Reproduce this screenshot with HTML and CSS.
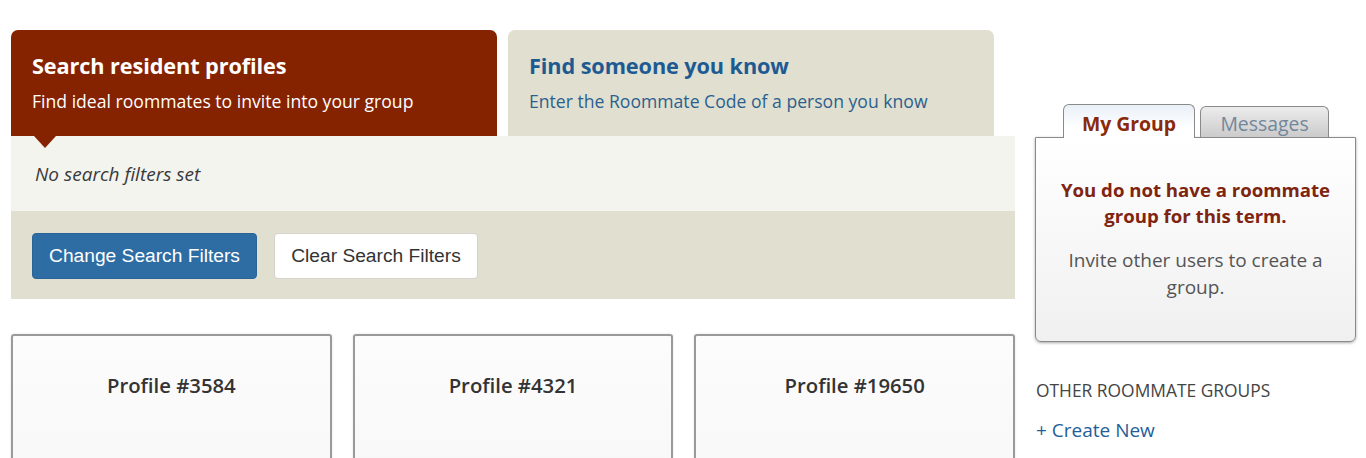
FILE: index.html
```html
<!DOCTYPE html>
<html>
<head>
<meta charset="utf-8">
<link rel="stylesheet" href="styles.css">
</head>
<body>
<div class="page">
  <div class="main">
    <div class="tabs">
      <div class="tab tab-active">
        <div class="tab-title">Search resident profiles</div>
        <div class="tab-sub">Find ideal roommates to invite into your group</div>
        <span class="pointer"></span>
      </div>
      <div class="tab tab-inactive">
        <div class="tab-title">Find someone you know</div>
        <div class="tab-sub">Enter the Roommate Code of a person you know</div>
      </div>
    </div>
    <div class="filters">No search filters set</div>
    <div class="actions">
      <button class="btn btn-primary">Change Search Filters</button>
      <button class="btn btn-default">Clear Search Filters</button>
    </div>
    <div class="cards">
      <div class="card"><div class="card-title">Profile #3584</div></div>
      <div class="card"><div class="card-title">Profile #4321</div></div>
      <div class="card"><div class="card-title">Profile #19650</div></div>
    </div>
  </div>
  <div class="side">
    <div class="side-tabs">
      <div class="stab stab-active">My Group</div>
      <div class="stab stab-inactive">Messages</div>
    </div>
    <div class="panel">
      <div class="panel-strong">You do not have a roommate group for this term.</div>
      <div class="panel-text">Invite other users to create a group.</div>
    </div>
    <div class="other-label">OTHER ROOMMATE GROUPS</div>
    <a class="create-link">+ Create New</a>
  </div>
</div>
</body>
</html>
```
FILE: styles.css
```css
* { box-sizing: border-box; }
html, body { margin: 0; padding: 0; background: #fff; overflow: hidden; }
body { font-family: "Open Sans", "Liberation Sans", sans-serif; color: #333; }

.page {
  display: flex;
  gap: 20px;
  padding: 30px 0 0 11px;
}
.main { width: 1004px; flex: none; }

.tabs { display: flex; gap: 11px; }
.tab {
  position: relative;
  width: 486px;
  height: 106px;
  border-radius: 7px 7px 0 0;
  padding: 21px 10px 0 21px;
  white-space: nowrap;
}
.tab-active { background: #852200; color: #fff; }
.tab-inactive { background: #e0dfd0; color: #1e5a92; }
.tab-title { font-size: 21.7px; font-weight: 700; line-height: 30px; letter-spacing: -0.1px; }
.tab-sub { font-size: 17.6px; line-height: 24px; margin-top: 8px; }
.tab-inactive .tab-sub { color: #2c5f8e; }
.pointer {
  position: absolute;
  left: 23px;
  bottom: -12px;
  width: 0; height: 0;
  border-left: 11px solid transparent;
  border-right: 11px solid transparent;
  border-top: 12px solid #852200;
}

.filters {
  background: #f4f4ef;
  height: 75px;
  padding: 24px 0 0 24px;
  font-style: italic;
  font-size: 19px;
  color: #3a3a3a;
  line-height: 28px;
}
.actions {
  background: #e0dfd0;
  height: 88px;
  padding: 22px 21px;
  display: flex;
  gap: 17px;
}
.btn {
  height: 46px;
  font-family: "Liberation Sans", Arial, sans-serif;
  font-size: 19.2px;
  border-radius: 4px;
  padding: 0;
  cursor: pointer;
}
.btn-primary { width: 225px; background: #2e6da4; color: #fff; border: 1px solid #2a6496; }
.btn-default { width: 204px; background: #fff; color: #333; border: 1px solid #d4d4cc; }

.cards {
  display: flex;
  gap: 21px;
  margin-top: 35px;
}
.card {
  width: 321px;
  height: 140px;
  border: 2px solid #9a9a9a;
  border-radius: 3px 3px 0 0;
  background: linear-gradient(#fcfcfc, #f8f8f8);
  box-shadow: 0 0 2px rgba(0,0,0,0.15);
  padding-top: 35px;
}
.card-title {
  text-align: center;
  font-size: 20.3px;
  font-weight: 600;
  color: #333;
  line-height: 28px;
}

.side { width: 321px; flex: none; padding-top: 74px; }
.side-tabs { display: flex; gap: 5px; padding-left: 28px; position: relative; z-index: 1; }
.stab {
  border: 1.5px solid #8a8a8a;
  border-bottom: none;
  border-radius: 6px 6px 0 0;
  text-align: center;
  font-size: 19.4px;
  white-space: nowrap;
}
.stab-active {
  width: 132px;
  background: linear-gradient(#e9f0f8, #ffffff 70%);
  color: #8a2a0a;
  font-weight: 700;
  margin-bottom: -1px;
  height: 34px;
  line-height: 38px;
}
.stab-inactive {
  width: 129px;
  background: linear-gradient(#ececec, #cbcbcb);
  color: #72879a;
  margin-top: 2px;
  height: 31px;
  line-height: 34px;
}
.panel {
  height: 205px;
  border: 1.5px solid #8a8a8a;
  border-radius: 0 0 6px 6px;
  background: linear-gradient(#ffffff, #f0f0f0);
  box-shadow: 0 1px 3px rgba(0,0,0,0.35);
  text-align: center;
  padding: 39px 8px 0;
}
.panel-strong {
  color: #7e2410;
  font-weight: 700;
  font-size: 18.6px;
  line-height: 26px;
}
.panel-text {
  color: #555;
  font-size: 19px;
  line-height: 27px;
  margin-top: 18px;
  padding: 0 8px;
}
.other-label {
  margin-top: 36px;
  font-size: 17.4px;
  line-height: 24px;
  color: #444;
  padding-left: 1px;
}
.create-link {
  display: block;
  margin-top: 16px;
  font-size: 19px;
  line-height: 24px;
  color: #245e9a;
  padding-left: 1px;
}
```
